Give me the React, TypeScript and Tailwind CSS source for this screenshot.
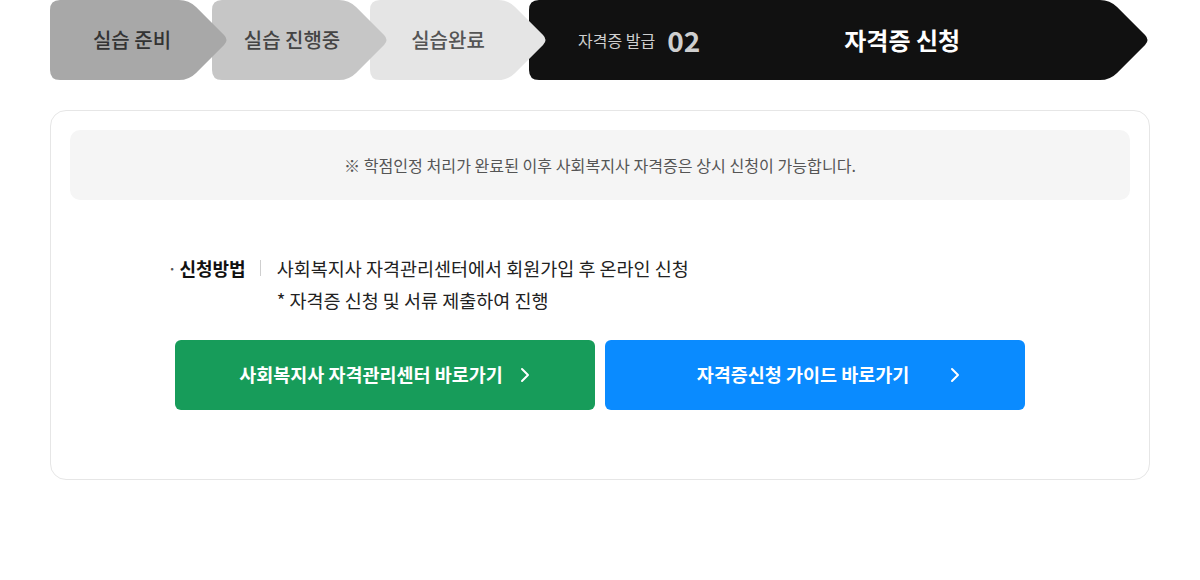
import { ReactNode } from "react";

const FONT = { fontFamily: '"Noto Sans CJK KR", "Noto Sans", sans-serif' };

// arrow-shaped step background (rounded left corners, 45° arrow on the right)
function arrowPath(w: number, h = 80, d = 40, r = 10, k = 10, t = 7) {
  const c = w - d;
  const s = k * Math.SQRT1_2;
  const u = t * Math.SQRT1_2;
  const m = h / 2;
  return `M${r},0 L${c - k},0 Q${c},0 ${c + s},${s} L${w - u},${m - u} Q${w},${m} ${w - u},${m + u} L${c + s},${h - s} Q${c},${h} ${c - k},${h} L${r},${h} Q0,${h} 0,${h - r} L0,${r} Q0,0 ${r},0 Z`;
}

function Step({
  width,
  fill,
  className,
  children,
}: {
  width: number;
  fill: string;
  className: string;
  children: ReactNode;
}) {
  return (
    <div className={`relative h-[80px] shrink-0 ${className}`} style={{ width }}>
      <svg className="absolute inset-0" width={width} height={80} viewBox={`0 0 ${width} 80`}>
        <path d={arrowPath(width)} fill={fill} />
      </svg>
      <div className="relative flex h-full items-center">{children}</div>
    </div>
  );
}

function Chevron() {
  return (
    <svg width="10" height="16" viewBox="0 0 10 16" fill="none">
      <path d="M2 2l6 6-6 6" stroke="white" strokeWidth="2" strokeLinecap="round" strokeLinejoin="round" />
    </svg>
  );
}

export default function App() {
  return (
    <div className="min-h-[580px] w-[1200px] bg-white px-[50px]" style={FONT}>
      {/* Steps */}
      <div className="flex">
        <Step width={179} fill="#a8a8a8" className="z-40">
          <span className="w-full pr-[15px] text-center text-[20px] font-medium text-[#333]">실습 준비</span>
        </Step>
        <Step width={177} fill="#c6c6c6" className="z-30 -ml-[17px]">
          <span className="w-full pr-[17px] text-center text-[20px] font-medium text-[#444]">실습 진행중</span>
        </Step>
        <Step width={178} fill="#e5e5e5" className="z-20 -ml-[19px]">
          <span className="w-full pr-[22px] text-center text-[20px] font-medium text-[#555]">실습완료</span>
        </Step>
        <Step width={621} fill="#111111" className="z-10 -ml-[19px]">
          <div className="flex items-center pl-[49px]">
            <span className="text-[16px] text-[#cfcfcf]">자격증 발급</span>
            <span className="ml-[12px] text-[28px] font-bold leading-none text-[#cfcfcf]">02</span>
            <span className="ml-[144px] text-[24px] font-bold text-white">자격증 신청</span>
          </div>
        </Step>
      </div>

      {/* Content card */}
      <div className="mt-[30px] rounded-[16px] border border-[#e6e6e6] px-[19px] pb-[69px] pt-[19px]">
        <div className="flex h-[70px] items-center justify-center rounded-[10px] bg-[#f5f5f5]">
          <p className="text-[16.1px] text-[#555]">※ 학점인정 처리가 완료된 이후 사회복지사 자격증은 상시 신청이 가능합니다.</p>
        </div>

        <div className="mx-auto mt-[52px] w-[860px]">
          <div className="flex items-start text-[18.5px] leading-[32px]">
            <div className="-ml-[3px] flex h-[32px] items-center">
              <span className="mr-[2px] text-[#555]">·</span>
              <span className="text-[18px] font-bold text-[#111]">신청방법</span>
              <span className="ml-[14px] mr-[16px] h-[16px] w-px bg-[#cfcfcf]" />
            </div>
            <div className="text-[#222]">
              <p>사회복지사 자격관리센터에서 회원가입 후 온라인 신청</p>
              <p>* 자격증 신청 및 서류 제출하여 진행</p>
            </div>
          </div>

          <div className="mt-[24px] grid grid-cols-2 gap-[10px] px-[5px]">
            <a className="relative flex h-[70px] items-center justify-center rounded-[6px] bg-[#179c5a] pr-[28px] text-[18.5px] font-bold text-white">
              사회복지사 자격관리센터 바로가기
              <span className="absolute right-[65px] top-1/2 -translate-y-1/2">
                <Chevron />
              </span>
            </a>
            <a className="relative flex h-[70px] items-center justify-center rounded-[6px] bg-[#0a8bff] pr-[24px] text-[18.5px] font-bold text-white">
              자격증신청 가이드 바로가기
              <span className="absolute right-[65px] top-1/2 -translate-y-1/2">
                <Chevron />
              </span>
            </a>
          </div>
        </div>
      </div>
    </div>
  );
}
